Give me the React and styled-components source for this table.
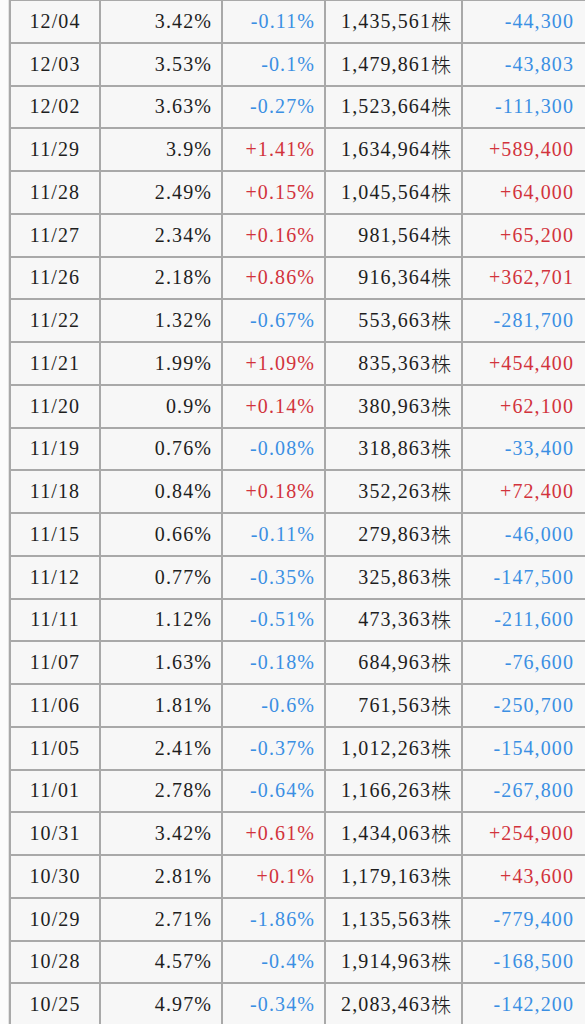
import React from 'react'
// style
import styled, { createGlobalStyle } from 'styled-components'

const rows = [
    ['12/04', '3.42%', '-0.11%', '1,435,561', '-44,300'],
    ['12/03', '3.53%', '-0.1%', '1,479,861', '-43,803'],
    ['12/02', '3.63%', '-0.27%', '1,523,664', '-111,300'],
    ['11/29', '3.9%', '+1.41%', '1,634,964', '+589,400'],
    ['11/28', '2.49%', '+0.15%', '1,045,564', '+64,000'],
    ['11/27', '2.34%', '+0.16%', '981,564', '+65,200'],
    ['11/26', '2.18%', '+0.86%', '916,364', '+362,701'],
    ['11/22', '1.32%', '-0.67%', '553,663', '-281,700'],
    ['11/21', '1.99%', '+1.09%', '835,363', '+454,400'],
    ['11/20', '0.9%', '+0.14%', '380,963', '+62,100'],
    ['11/19', '0.76%', '-0.08%', '318,863', '-33,400'],
    ['11/18', '0.84%', '+0.18%', '352,263', '+72,400'],
    ['11/15', '0.66%', '-0.11%', '279,863', '-46,000'],
    ['11/12', '0.77%', '-0.35%', '325,863', '-147,500'],
    ['11/11', '1.12%', '-0.51%', '473,363', '-211,600'],
    ['11/07', '1.63%', '-0.18%', '684,963', '-76,600'],
    ['11/06', '1.81%', '-0.6%', '761,563', '-250,700'],
    ['11/05', '2.41%', '-0.37%', '1,012,263', '-154,000'],
    ['11/01', '2.78%', '-0.64%', '1,166,263', '-267,800'],
    ['10/31', '3.42%', '+0.61%', '1,434,063', '+254,900'],
    ['10/30', '2.81%', '+0.1%', '1,179,163', '+43,600'],
    ['10/29', '2.71%', '-1.86%', '1,135,563', '-779,400'],
    ['10/28', '4.57%', '-0.4%', '1,914,963', '-168,500'],
    ['10/25', '4.97%', '-0.34%', '2,083,463', '-142,200'],
]

const tone = (v) => (v.startsWith('+') ? 'up' : 'down')

const App = () => {
    return (
        <>
            <GlobalStyle />
            <StyledPage>
                <StyledGrid>
                    {rows.map(([date, ratio, diff, shares, change]) => (
                        <React.Fragment key={date}>
                            <StyledCell $align="center">{date}</StyledCell>
                            <StyledCell>{ratio}</StyledCell>
                            <StyledCell $tone={tone(diff)}>{diff}</StyledCell>
                            <StyledCell $pad="10px">{shares}<StyledUnit>株</StyledUnit></StyledCell>
                            <StyledCell $tone={tone(change)} $pad="13px">{change}</StyledCell>
                        </React.Fragment>
                    ))}
                </StyledGrid>
            </StyledPage>
        </>
    )
}

const GlobalStyle = createGlobalStyle`
    html, body {
        margin: 0;
        background: #fcfcfc;
        overflow: hidden;
    }
`

const StyledPage = styled.div`
    width: 585px;
    height: 1024px;
    overflow: hidden;
    padding-left: 2px;
    box-sizing: border-box;
`

const StyledGrid = styled.div`
    display: grid;
    grid-template-columns: 88px 120px 101px 135px 124px;
    grid-auto-rows: 40.75px;
    gap: 2px;
    padding: 2px;
    margin-top: -1px;
    margin-left: 6px;
    width: max-content;
    background: #a9a9a9;
    border-left: 1px solid #e4e4e4;
    font-family: "Liberation Serif", "Noto Sans CJK JP", serif;
    font-size: 20px;
    letter-spacing: 1.1px;
`

const colors = {
    up: '#d2333c',
    down: '#3b8fe3',
}

const StyledCell = styled.div`
    display: flex;
    align-items: center;
    justify-content: ${({ $align }) => ($align === 'center' ? 'center' : 'flex-end')};
    padding: 0 ${({ $align, $pad }) => ($align === 'center' ? '0' : $pad || '9px')};
    background: #f7f7f7;
    color: ${({ $tone }) => colors[$tone] || '#1e1e1e'};
    white-space: nowrap;
`

const StyledUnit = styled.span`
    font-size: 20px;
    font-weight: 300;
    letter-spacing: 0;
`

export default App
